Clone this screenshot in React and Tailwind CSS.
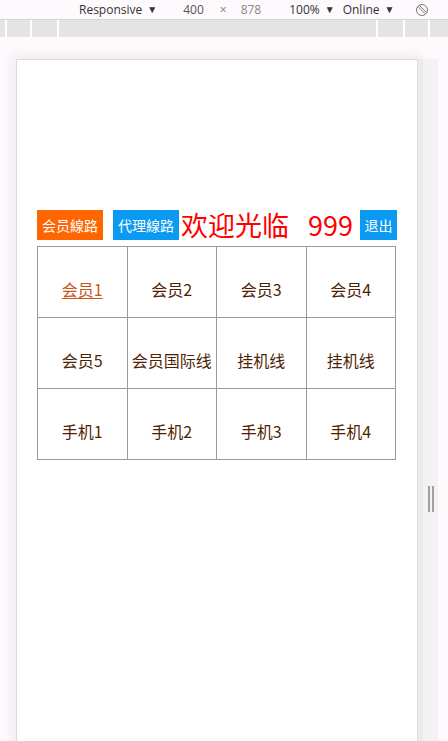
import React from "react";

const rows = [
  ["会员1", "会员2", "会员3", "会员4"],
  ["会员5", "会员国际线", "挂机线", "挂机线"],
  ["手机1", "手机2", "手机3", "手机4"],
];

function Toolbar() {
  return (
    <div className="h-[20px] shrink-0 border-b border-[#d6d4d6] flex items-center text-[12px] text-[#333] whitespace-nowrap" style={{ fontFamily: '"Open Sans", "Noto Sans", sans-serif' }}>
      <span className="ml-[79px]">Responsive</span>
      <span className="ml-[5px] text-[10px]">▼</span>
      <span className="ml-[26px] text-[#555]">400</span>
      <span className="ml-[16px] text-[#777] text-[12px]">×</span>
      <span className="ml-[14px] text-[#888]">878</span>
      <span className="ml-[28px]">100%</span>
      <span className="ml-[5px] text-[10px]">▼</span>
      <span className="ml-[8px]">Online</span>
      <span className="ml-[5px] text-[10px]">▼</span>
      <svg className="ml-[21px]" width="14" height="14" viewBox="0 0 14 14" fill="none" stroke="#777" strokeWidth="1">
        <circle cx="7" cy="7" r="5.5" />
        <path d="M3.2 3.8 L10.2 10.8 M4.5 2.5 L11.5 9.5" />
      </svg>
    </div>
  );
}

function Ruler() {
  const cell = "h-full bg-[#e4e4e4]";
  return (
    <div className="h-[17px] shrink-0 flex gap-[2px] bg-white">
      <div className={`${cell} w-[5px]`} />
      <div className={`${cell} w-[23px]`} />
      <div className={`${cell} w-[25px]`} />
      <div className={`${cell} flex-1`} />
      <div className={`${cell} w-[25px]`} />
      <div className={`${cell} w-[23px]`} />
      <div className={`${cell} w-[18px]`} />
    </div>
  );
}

function Page() {
  return (
    <div className="pt-[150px] mx-auto w-[360px]" style={{ fontFamily: '"Noto Sans CJK SC", "Noto Sans", sans-serif' }}>
      <div className="flex items-center h-[30px] whitespace-nowrap">
        <div className="shrink-0 w-[66px] h-[30px] bg-[#ff6600] text-white text-[14px] flex items-center justify-center">会员線路</div>
        <div className="shrink-0 ml-[10px] w-[66px] h-[30px] bg-[#0a9af2] text-white text-[14px] flex items-center justify-center">代理線路</div>
        <div className="shrink-0 ml-[2px] text-[#ff0000] text-[27px] leading-[30px]">
          欢迎光临<span className="ml-[19px]">999</span>
        </div>
        <div className="shrink-0 ml-auto w-[37px] h-[30px] bg-[#0a9af2] text-white text-[14px] flex items-center justify-center">退出</div>
      </div>
      <table className="mt-[6px] w-[359px] border-collapse table-fixed">
        <tbody>
          {rows.map((r, i) => (
            <tr key={i} className="h-[71px]">
              {r.map((c, j) => (
                <td key={j} className="border border-[#9a9a9a] text-center text-[16px] text-[#4f1f05] px-0 pt-[14px] whitespace-nowrap">
                  {i === 0 && j === 0 ? <span className="text-[#c8561c] underline underline-offset-2">{c}</span> : c}
                </td>
              ))}
            </tr>
          ))}
        </tbody>
      </table>
    </div>
  );
}

export default function App() {
  return (
    <div className="w-[448px] h-[741px] overflow-hidden bg-[#fdf9fd] flex flex-col">
      <Toolbar />
      <Ruler />
      <div className="flex pt-[22px] pl-[16px]">
        <div className="shrink-0 w-[402px] h-[880px] border border-[#dcdadc] bg-white shadow-[0_0_10px_5px_rgba(0,0,0,0.05)]">
          <Page />
        </div>
        <div className="shrink-0 flex h-[880px]">
          <div className="w-[5px] bg-[#ebebeb]" />
          <div className="w-[15px] bg-[#f2f1f3] flex items-center justify-center gap-[2px]">
            <div className="w-[2px] h-[26px] bg-[#a0a0a0]" />
            <div className="w-[2px] h-[26px] bg-[#a0a0a0]" />
          </div>
        </div>
      </div>
    </div>
  );
}
